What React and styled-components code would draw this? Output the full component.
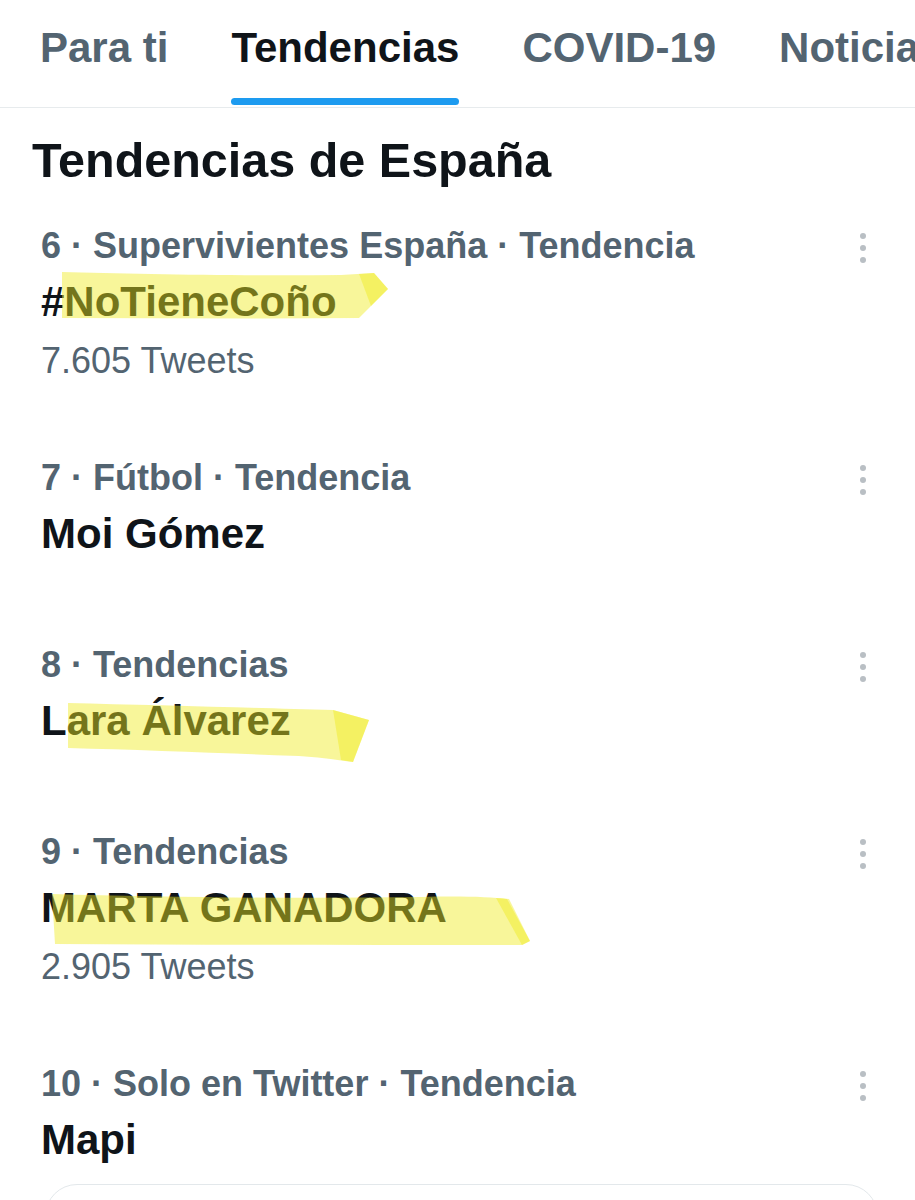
import React from "react";
import styled, { createGlobalStyle } from "styled-components";

const GlobalStyle = createGlobalStyle`
  html, body {
    margin: 0;
    padding: 0;
    background: #ffffff;
    overflow: hidden;
  }
  body {
    font-family: "Liberation Sans", Arial, sans-serif;
    color: #0f1419;
  }
`;

const Page = styled.div`
  width: 915px;
  min-height: 1200px;
  background: #ffffff;
  overflow: hidden;
`;

const TabBar = styled.nav`
  display: flex;
  padding-left: 8.5px;
  border-bottom: 1px solid #e7ebed;
  white-space: nowrap;
  overflow: hidden;
`;

const Tab = styled.div`
  display: flex;
  flex-direction: column;
  align-items: center;
  padding: 23px 31.5px 2px;
  flex-shrink: 0;
`;

const TabLabel = styled.span`
  font-size: 42px;
  line-height: 50px;
  font-weight: 700;
  color: ${(p) => (p.$active ? "#0f1419" : "#536471")};
`;

const TabIndicator = styled.span`
  align-self: stretch;
  height: 7px;
  margin-top: 25px;
  border-radius: 4px;
  background: ${(p) => (p.$active ? "#1d9bf0" : "transparent")};
`;

const Heading = styled.h2`
  margin: 0;
  padding: 24px 32px 12px;
  font-size: 48.5px;
  line-height: 56px;
  font-weight: 700;
  color: #0f1419;
`;

const List = styled.div`
  display: flex;
  flex-direction: column;
  gap: 34px;
`;

const Row = styled.div`
  display: flex;
  align-items: flex-start;
  padding: 24px 39px ${(p) => (p.$hasCount ? "15px" : "26px")} 41px;

  &:last-child {
    padding-bottom: 19px;
  }
`;

const Content = styled.div`
  flex: 1;
  display: flex;
  flex-direction: column;
`;

const Meta = styled.div`
  font-size: 36px;
  line-height: 44px;
  font-weight: 700;
  color: #536471;
`;

const Title = styled.div`
  position: relative;
  margin-top: 9px;
  font-size: 42px;
  line-height: 50px;
  font-weight: 700;
  color: #0f1419;
`;

const Count = styled.div`
  margin-top: 12px;
  font-size: 36px;
  line-height: 44px;
  font-weight: 400;
  color: #536471;
`;

const Dots = styled.div`
  width: 26px;
  height: 44px;
  display: flex;
  flex-direction: column;
  align-items: center;
  justify-content: center;
  gap: 6px;
  margin-top: 2px;
`;

const Dot = styled.span`
  width: 6px;
  height: 6px;
  border-radius: 50%;
  background: #b9bfc4;
`;

const Marker = styled.svg`
  position: absolute;
  left: 0;
  top: 0;
  width: 1px;
  height: 1px;
  overflow: visible;
  pointer-events: none;
  filter: blur(0.7px);
`;

const Card = styled.div`
  margin: 0 37px 0 45px;
  height: 120px;
  border: 1px solid #e3e8eb;
  border-radius: 32px;
`;

const tabs = [
  { label: "Para ti" },
  { label: "Tendencias", active: true },
  { label: "COVID-19" },
  { label: "Noticias" },
];

const markFill = "rgba(240, 235, 30, 0.45)";

const highlights = {
  a: [
    "M21 -5 C90 -3 200 -1 300 -2 L333 -4 L347 12 L318 41 C220 42 120 41 21 41 Z",
    "M318 -3 L333 -4 L347 12 L330 29 Z",
  ],
  b: [
    "M27 7 C110 9 220 12 292 14 L328 24 L312 66 C290 63 275 61 258 60 C180 57 100 54 27 52 Z",
    "M292 14 L328 24 L312 66 L300 64 Z",
  ],
  c: [
    "M11 11 C120 14 250 16 380 14 C420 13 450 14 466 16 L489 58 L481 62 C320 62 160 62 14 61 Z",
    "M455 15 L468 16 L489 58 L481 62 Z",
  ],
};

const trends = [
  { rank: 6, context: "Supervivientes España · Tendencia", name: "#NoTieneCoño", count: "7.605 Tweets", mark: "a" },
  { rank: 7, context: "Fútbol · Tendencia", name: "Moi Gómez" },
  { rank: 8, context: "Tendencias", name: "Lara Álvarez", mark: "b" },
  { rank: 9, context: "Tendencias", name: "MARTA GANADORA", count: "2.905 Tweets", mark: "c" },
  { rank: 10, context: "Solo en Twitter · Tendencia", name: "Mapi" },
];

function Highlight({ id }) {
  return (
    <Marker aria-hidden="true">
      {highlights[id].map((d, i) => (
        <path key={i} d={d} fill={markFill} />
      ))}
    </Marker>
  );
}

export default function App() {
  return (
    <Page>
      <GlobalStyle />
      <TabBar>
        {tabs.map((t) => (
          <Tab key={t.label}>
            <TabLabel $active={t.active}>{t.label}</TabLabel>
            <TabIndicator $active={t.active} />
          </Tab>
        ))}
      </TabBar>
      <Heading>Tendencias de España</Heading>
      <List>
        {trends.map((t) => (
          <Row key={t.rank} $hasCount={!!t.count}>
            <Content>
              <Meta>
                {t.rank} · {t.context}
              </Meta>
              <Title>
                {t.name}
                {t.mark && <Highlight id={t.mark} />}
              </Title>
              {t.count && <Count>{t.count}</Count>}
            </Content>
            <Dots>
              <Dot />
              <Dot />
              <Dot />
            </Dots>
          </Row>
        ))}
      </List>
      <Card />
    </Page>
  );
}
